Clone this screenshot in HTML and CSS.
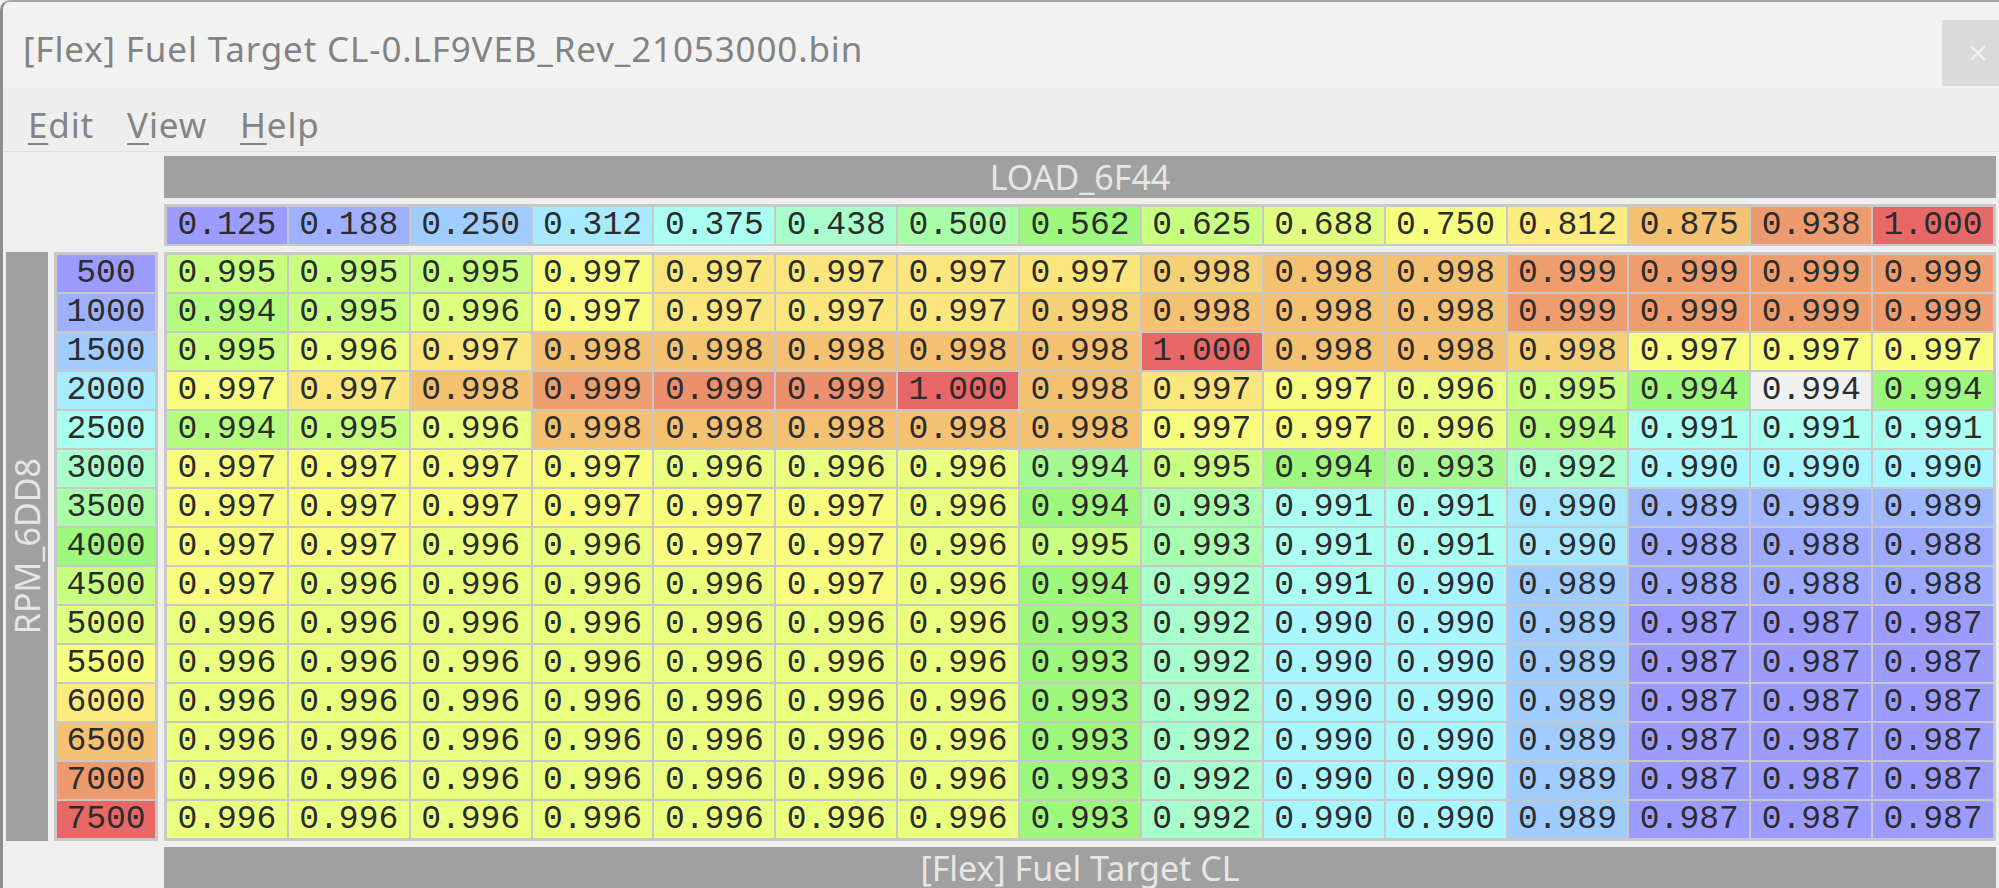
FILE: index.html
```html
<!DOCTYPE html>
<html lang="en">
<head>
<meta charset="utf-8">
<title>[Flex] Fuel Target CL</title>
<link rel="stylesheet" href="styles.css">
</head>
<body>
<div class="window">
  <header class="titlebar">
    <div class="title">[Flex] Fuel Target CL-0.LF9VEB_Rev_21053000.bin</div>
    <div class="close"><svg width="18" height="16" viewBox="0 0 18 16"><path d="M2 1 L16 15 M16 1 L2 15" stroke="#f2f2f2" stroke-width="2.4" fill="none"/></svg></div>
  </header>
  <nav class="menubar">
    <span class="menu"><u>E</u>dit</span>
    <span class="menu"><u>V</u>iew</span>
    <span class="menu"><u>H</u>elp</span>
  </nav>
  <main class="editor">
    <div class="bar xtitle">LOAD_6F44</div>
    <div class="frame xaxis">
      <div class="k0">0.125</div><div class="h1">0.188</div><div class="k3">0.250</div><div class="h3">0.312</div><div class="k6">0.375</div><div class="k7">0.438</div><div class="h6">0.500</div><div class="k10">0.562</div><div class="k12">0.625</div><div class="h9">0.688</div><div class="h10">0.750</div><div class="h11">0.812</div><div class="k18">0.875</div><div class="h13">0.938</div><div class="k21">1.000</div>
    </div>
    <div class="bar ytitle"><span>RPM_6DD8</span></div>
    <div class="frame yaxis">
      <div class="k0">500</div><div class="h1">1000</div><div class="k3">1500</div><div class="h3">2000</div><div class="k6">2500</div><div class="k7">3000</div><div class="h6">3500</div><div class="k10">4000</div><div class="k12">4500</div><div class="h9">5000</div><div class="h10">5500</div><div class="h11">6000</div><div class="k18">6500</div><div class="h13">7000</div><div class="k21">7500</div>
    </div>
    <div class="frame table">
      <div class="k12">0.995</div><div class="k12">0.995</div><div class="k12">0.995</div><div class="k15">0.997</div><div class="k16">0.997</div><div class="k16">0.997</div><div class="k16">0.997</div><div class="k16">0.997</div><div class="k17">0.998</div><div class="k18">0.998</div><div class="k18">0.998</div><div class="k19">0.999</div><div class="k19">0.999</div><div class="k19">0.999</div><div class="k19">0.999</div>
      <div class="k11">0.994</div><div class="k12">0.995</div><div class="k13">0.996</div><div class="k15">0.997</div><div class="k16">0.997</div><div class="k16">0.997</div><div class="k16">0.997</div><div class="k17">0.998</div><div class="k18">0.998</div><div class="k18">0.998</div><div class="k18">0.998</div><div class="k19">0.999</div><div class="k19">0.999</div><div class="k19">0.999</div><div class="k19">0.999</div>
      <div class="k12">0.995</div><div class="k14">0.996</div><div class="k16">0.997</div><div class="k18">0.998</div><div class="k18">0.998</div><div class="k18">0.998</div><div class="k18">0.998</div><div class="k18">0.998</div><div class="k21">1.000</div><div class="k18">0.998</div><div class="k18">0.998</div><div class="k17">0.998</div><div class="k15">0.997</div><div class="k15">0.997</div><div class="k15">0.997</div>
      <div class="k15">0.997</div><div class="k16">0.997</div><div class="k18">0.998</div><div class="k19">0.999</div><div class="k20">0.999</div><div class="k20">0.999</div><div class="k21">1.000</div><div class="k18">0.998</div><div class="k16">0.997</div><div class="k15">0.997</div><div class="k14">0.996</div><div class="k12">0.995</div><div class="k10">0.994</div><div class="sel">0.994</div><div class="k10">0.994</div>
      <div class="k11">0.994</div><div class="k12">0.995</div><div class="k14">0.996</div><div class="k18">0.998</div><div class="k18">0.998</div><div class="k18">0.998</div><div class="k18">0.998</div><div class="k18">0.998</div><div class="k15">0.997</div><div class="k15">0.997</div><div class="k14">0.996</div><div class="k11">0.994</div><div class="k6">0.991</div><div class="k6">0.991</div><div class="k6">0.991</div>
      <div class="k15">0.997</div><div class="k15">0.997</div><div class="k15">0.997</div><div class="k15">0.997</div><div class="k14">0.996</div><div class="k14">0.996</div><div class="k14">0.996</div><div class="k9">0.994</div><div class="k12">0.995</div><div class="k10">0.994</div><div class="k9">0.993</div><div class="k7">0.992</div><div class="k5">0.990</div><div class="k5">0.990</div><div class="k5">0.990</div>
      <div class="k15">0.997</div><div class="k15">0.997</div><div class="k15">0.997</div><div class="k15">0.997</div><div class="k15">0.997</div><div class="k15">0.997</div><div class="k14">0.996</div><div class="k10">0.994</div><div class="k8">0.993</div><div class="k6">0.991</div><div class="k6">0.991</div><div class="k4">0.990</div><div class="k2">0.989</div><div class="k2">0.989</div><div class="k2">0.989</div>
      <div class="k15">0.997</div><div class="k15">0.997</div><div class="k14">0.996</div><div class="k14">0.996</div><div class="k15">0.997</div><div class="k15">0.997</div><div class="k14">0.996</div><div class="k12">0.995</div><div class="k8">0.993</div><div class="k6">0.991</div><div class="k6">0.991</div><div class="k4">0.990</div><div class="k1">0.988</div><div class="k1">0.988</div><div class="k1">0.988</div>
      <div class="k15">0.997</div><div class="k14">0.996</div><div class="k14">0.996</div><div class="k14">0.996</div><div class="k14">0.996</div><div class="k15">0.997</div><div class="k14">0.996</div><div class="k10">0.994</div><div class="k7">0.992</div><div class="k6">0.991</div><div class="k5">0.990</div><div class="k3">0.989</div><div class="k1">0.988</div><div class="k1">0.988</div><div class="k1">0.988</div>
      <div class="k14">0.996</div><div class="k14">0.996</div><div class="k14">0.996</div><div class="k14">0.996</div><div class="k14">0.996</div><div class="k14">0.996</div><div class="k14">0.996</div><div class="k10">0.993</div><div class="k7">0.992</div><div class="k5">0.990</div><div class="k5">0.990</div><div class="k3">0.989</div><div class="k0">0.987</div><div class="k0">0.987</div><div class="k0">0.987</div>
      <div class="k14">0.996</div><div class="k14">0.996</div><div class="k14">0.996</div><div class="k14">0.996</div><div class="k14">0.996</div><div class="k14">0.996</div><div class="k14">0.996</div><div class="k10">0.993</div><div class="k7">0.992</div><div class="k5">0.990</div><div class="k5">0.990</div><div class="k3">0.989</div><div class="k0">0.987</div><div class="k0">0.987</div><div class="k0">0.987</div>
      <div class="k14">0.996</div><div class="k14">0.996</div><div class="k14">0.996</div><div class="k14">0.996</div><div class="k14">0.996</div><div class="k14">0.996</div><div class="k14">0.996</div><div class="k10">0.993</div><div class="k7">0.992</div><div class="k5">0.990</div><div class="k5">0.990</div><div class="k3">0.989</div><div class="k0">0.987</div><div class="k0">0.987</div><div class="k0">0.987</div>
      <div class="k14">0.996</div><div class="k14">0.996</div><div class="k14">0.996</div><div class="k14">0.996</div><div class="k14">0.996</div><div class="k14">0.996</div><div class="k14">0.996</div><div class="k10">0.993</div><div class="k7">0.992</div><div class="k5">0.990</div><div class="k5">0.990</div><div class="k3">0.989</div><div class="k0">0.987</div><div class="k0">0.987</div><div class="k0">0.987</div>
      <div class="k14">0.996</div><div class="k14">0.996</div><div class="k14">0.996</div><div class="k14">0.996</div><div class="k14">0.996</div><div class="k14">0.996</div><div class="k14">0.996</div><div class="k10">0.993</div><div class="k7">0.992</div><div class="k5">0.990</div><div class="k5">0.990</div><div class="k3">0.989</div><div class="k0">0.987</div><div class="k0">0.987</div><div class="k0">0.987</div>
      <div class="k14">0.996</div><div class="k14">0.996</div><div class="k14">0.996</div><div class="k14">0.996</div><div class="k14">0.996</div><div class="k14">0.996</div><div class="k14">0.996</div><div class="k10">0.993</div><div class="k7">0.992</div><div class="k5">0.990</div><div class="k5">0.990</div><div class="k3">0.989</div><div class="k0">0.987</div><div class="k0">0.987</div><div class="k0">0.987</div>
    </div>
    <div class="bar footer">[Flex] Fuel Target CL</div>
  </main>
</div>
</body>
</html>
```
FILE: styles.css
```css
html, body {
  margin: 0;
  height: 100%;
  overflow: hidden;
  background: #efefef;
}

.window {
  box-sizing: border-box;
  height: 888px;
  background: #efefef;
  border-left: 3px solid #8e8e8e;
  border-top: 2px solid #a6a6a6;
  border-top-left-radius: 10px;
  font-family: "Noto Sans", "Open Sans", sans-serif;
}

.titlebar {
  height: 86px;
  background: #f2f2f2;
  display: flex;
  justify-content: space-between;
  align-items: flex-start;
  border-top-left-radius: 8px;
}

.title {
  margin: 24px 0 0 20px;
  font-size: 35px;
  letter-spacing: 0.85px;
  line-height: 46px;
  color: #838383;
  white-space: nowrap;
}

.close {
  flex-shrink: 0;
  margin-top: 18px;
  margin-right: -14px;
  width: 71px;
  height: 66px;
  background: #dadada;
  display: flex;
  align-items: center;
  justify-content: center;
}

.menubar {
  height: 64px;
  background: #eeeeee;
  border-bottom: 1px solid #dedede;
  box-sizing: border-box;
  display: flex;
  align-items: flex-start;
  padding-left: 25px;
  gap: 33px;
}

.menu {
  margin-top: 14px;
  font-size: 35px;
  letter-spacing: 0.85px;
  line-height: 46px;
  color: #848484;
}

.menu u {
  text-decoration-thickness: 2px;
  text-underline-offset: 5px;
}

.editor {
  display: grid;
  grid-template-columns: 42px 104px 1832px;
  grid-template-rows: 42px 42px 589px 42px;
  gap: 6px;
  padding: 4px 0 0 3px;
}

.bar {
  background: #a0a0a0;
  color: #e6e6e6;
  font-size: 34px;
  line-height: 42px;
  text-align: center;
  white-space: nowrap;
}

.xtitle { grid-column: 3; grid-row: 1; }
.footer { grid-column: 3; grid-row: 4; }

.ytitle {
  grid-column: 1;
  grid-row: 3;
  display: flex;
  align-items: center;
  justify-content: center;
}

.ytitle span {
  writing-mode: vertical-rl;
  transform: rotate(180deg);
  line-height: 42px;
}

.frame {
  background: #c8c8c8;
  padding: 3px;
  display: grid;
  gap: 2px;
  font-family: "Liberation Mono", "Courier New", monospace;
  font-size: 33px;
  color: #2c2c2c;
}

.frame > div {
  display: flex;
  align-items: center;
  justify-content: center;
  white-space: nowrap;
}

.xaxis {
  grid-column: 3;
  grid-row: 2;
  grid-template-columns: repeat(15, 1fr);
}

.yaxis {
  grid-column: 2;
  grid-row: 3;
  grid-template-rows: repeat(15, 1fr);
}

.table {
  grid-column: 3;
  grid-row: 3;
  grid-template-columns: repeat(15, 1fr);
  grid-template-rows: repeat(15, 1fr);
}

/* axis palette */
.h1 { background: #9eb0ff; }
.h3 { background: #a8eaff; }
.h6 { background: #a8ffa8; }
.h9 { background: #e0ff80; }
.h10 { background: #f6ff80; }
.h11 { background: #fcec80; }
.h13 { background: #ec9a6e; }

/* value palette */
.k0 { background: #9c9cff; }
.k1 { background: #9eaaff; }
.k2 { background: #a0b8ff; }
.k3 { background: #a0ccff; }
.k4 { background: #a8e8ff; }
.k5 { background: #a8f6ff; }
.k6 { background: #aafff0; }
.k7 { background: #a8ffcc; }
.k8 { background: #a8ffb0; }
.k9 { background: #a4fa90; }
.k10 { background: #9ef87e; }
.k11 { background: #b4fc80; }
.k12 { background: #c8ff80; }
.k13 { background: #dcff80; }
.k14 { background: #eaff80; }
.k15 { background: #f8fd80; }
.k16 { background: #fae67c; }
.k17 { background: #f6d076; }
.k18 { background: #f4c072; }
.k19 { background: #ee9e6e; }
.k20 { background: #eb8f6c; }
.k21 { background: #e86868; }
.sel { background: #f0f0f0; }
```
